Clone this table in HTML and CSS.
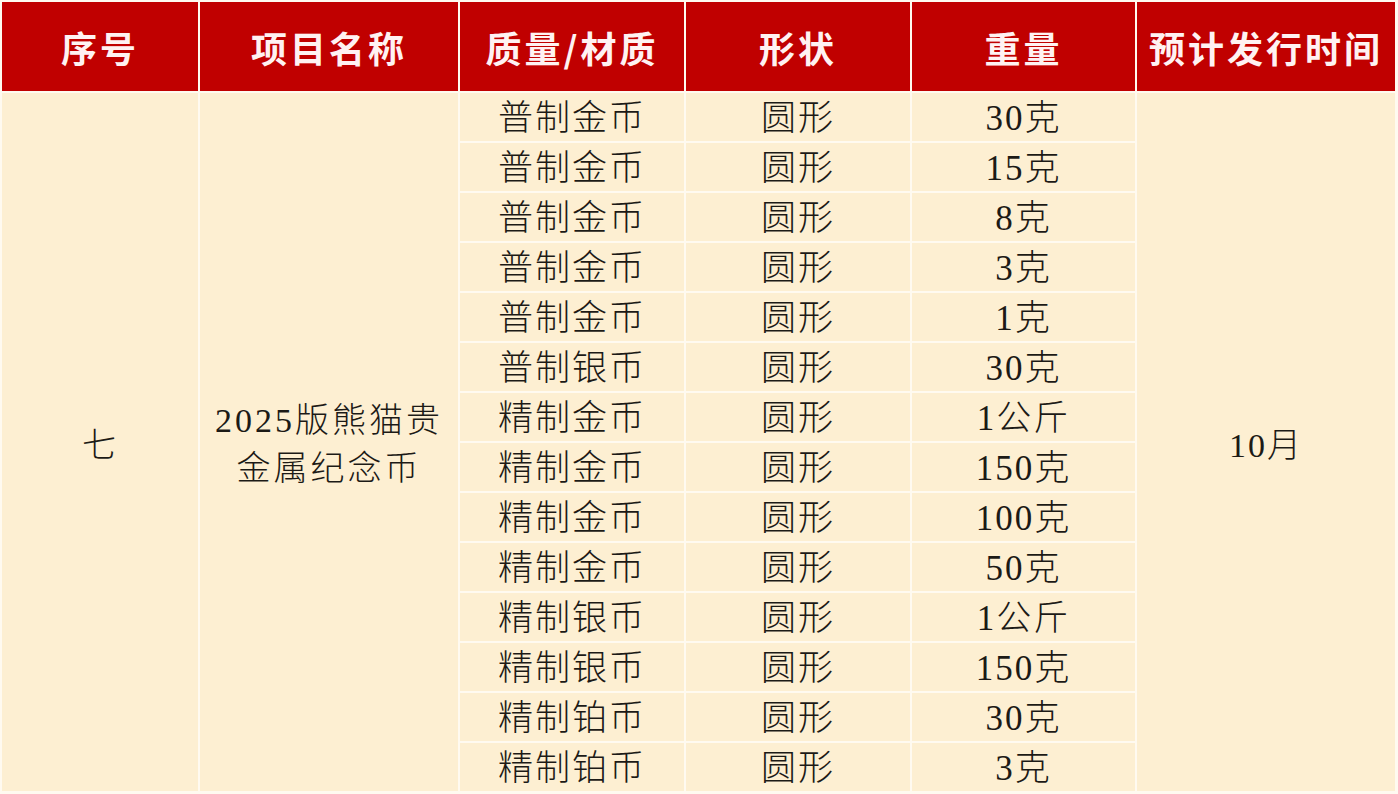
FILE: index.html
```html
<!DOCTYPE html>
<html lang="zh-CN">
<head>
<meta charset="utf-8">
<title>2025版熊猫贵金属纪念币</title>
<link rel="stylesheet" href="styles.css">
</head>
<body>
<table class="plan">
  <colgroup>
    <col class="c1"><col class="c2"><col class="c3"><col class="c4"><col class="c5"><col class="c6">
  </colgroup>
  <thead>
    <tr>
      <th>序号</th><th>项目名称</th><th>质量/材质</th><th>形状</th><th>重量</th><th>预计发行时间</th>
    </tr>
  </thead>
  <tbody>
    <tr>
      <td rowspan="14" class="big">七</td>
      <td rowspan="14" class="name">2025版熊猫贵<br>金属纪念币</td>
      <td>普制金币</td><td>圆形</td><td>30克</td>
      <td rowspan="14" class="big">10月</td>
    </tr>
    <tr><td>普制金币</td><td>圆形</td><td>15克</td></tr>
    <tr><td>普制金币</td><td>圆形</td><td>8克</td></tr>
    <tr><td>普制金币</td><td>圆形</td><td>3克</td></tr>
    <tr><td>普制金币</td><td>圆形</td><td>1克</td></tr>
    <tr><td>普制银币</td><td>圆形</td><td>30克</td></tr>
    <tr><td>精制金币</td><td>圆形</td><td>1公斤</td></tr>
    <tr><td>精制金币</td><td>圆形</td><td>150克</td></tr>
    <tr><td>精制金币</td><td>圆形</td><td>100克</td></tr>
    <tr><td>精制金币</td><td>圆形</td><td>50克</td></tr>
    <tr><td>精制银币</td><td>圆形</td><td>1公斤</td></tr>
    <tr><td>精制银币</td><td>圆形</td><td>150克</td></tr>
    <tr><td>精制铂币</td><td>圆形</td><td>30克</td></tr>
    <tr><td>精制铂币</td><td>圆形</td><td>3克</td></tr>
  </tbody>
</table>
</body>
</html>
```

FILE: styles.css
```css
html, body {
  margin: 0;
  padding: 0;
  background: #fffaf0;
}

.plan {
  border-collapse: separate;
  border-spacing: 2px;
  table-layout: fixed;
  width: 1397px;
  background: #fffaf0;
  font-family: "Liberation Serif", "Noto Sans CJK SC", serif;
  color: #1c1a16;
}

.c1 { width: 196px; }
.c2 { width: 258px; }
.c3 { width: 224px; }
.c4 { width: 224px; }
.c5 { width: 223px; }
.c6 { width: 258px; }

.plan th {
  background: #c00000;
  color: #fff2f2;
  height: 89px;
  padding: 0;
  font-family: "Noto Sans CJK SC", sans-serif;
  font-weight: 700;
  font-size: 36px;
  letter-spacing: 3px;
  text-align: center;
  vertical-align: middle;
}

.plan td {
  background: #fdefd2;
  height: 48px;
  padding: 4px 0 0;
  box-sizing: border-box;
  font-size: 35px;
  line-height: 44px;
  letter-spacing: 2px;
  text-align: center;
  vertical-align: middle;
  font-weight: 300;
}

.plan td.big {
  font-size: 34px;
  padding-top: 8px;
}

.plan td.name {
  font-size: 34px;
  line-height: 48px;
  letter-spacing: 3px;
  padding-top: 6px;
}
```
